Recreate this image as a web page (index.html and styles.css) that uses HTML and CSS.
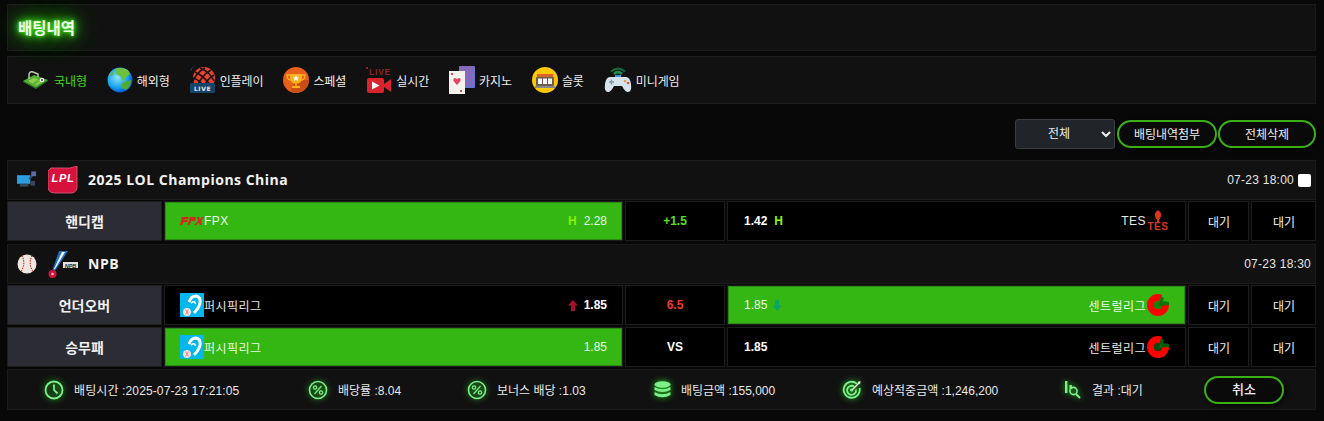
FILE: index.html
```html
<!DOCTYPE html>
<html lang="ko">
<head>
    <meta charset="UTF-8">
    <meta name="viewport" content="width=device-width, initial-scale=1.0">
    <title>배팅내역</title>
    <link rel="stylesheet" href="styles.css">
</head>
<body>
    <div class="page-title"><h1>배팅내역</h1></div>

    <div class="tabs">
        <a class="tab active">
            <svg class="tab-icon field" width="25" height="18" viewBox="0 0 25 18"><path d="M0 10 L11 4 L25 9 L13 17Z" fill="#4fae34"/><path d="M0 10 L13 17 L13 18 L0 11Z" fill="#2c7a24"/><path d="M13 17 L25 9 L25 10 L13 18Z" fill="#226a1e"/><path d="M5 10 L11 7 L20 10.5 L13 14.5Z" fill="#8ed04a"/><path d="M8 13 L14 9 L17 10 L11 14.5Z" fill="#5fb83a"/><path d="M6 8 V3 Q7 0 10 1 L15 3 V6" fill="none" stroke="#b9c9b4" stroke-width="1.5"/><circle cx="19" cy="9" r="2.2" fill="#f4f4f4"/><circle cx="19" cy="9" r="0.9" fill="#333"/></svg>
            <span>국내형</span>
        </a>
        <a class="tab">
            <svg class="tab-icon" width="26" height="26" viewBox="0 0 26 26"><defs><radialGradient id="globe" cx="0.4" cy="0.4" r="0.7"><stop offset="0" stop-color="#8fe4ff"/><stop offset="0.6" stop-color="#12a0f0"/><stop offset="1" stop-color="#0433c8"/></radialGradient></defs><circle cx="13" cy="13" r="12.5" fill="url(#globe)"/><path d="M9 1.5 Q16 0 21 3 L23 7 L17 12 L19 15 L16 14 L13 9 L9 7Z" fill="#6cc23e"/><path d="M15 16 L24 13 Q24 20 19 23 L15 21Z" fill="#4fae30"/><path d="M2 9 Q4 5 7 4 L6 8Z" fill="#5cb53e"/></svg>
            <span>해외형</span>
        </a>
        <a class="tab">
            <svg class="tab-icon" width="26" height="28" viewBox="0 0 26 28"><path d="M0 4 Q2 0 6 0 Q2 1 1.5 5Z" fill="#1c3a57"/><circle cx="14" cy="12" r="11" fill="#e8432e"/><path d="M5 6 Q14 10 21 20 M10 2 Q20 6 24 15 M3 12 Q10 14 15 22 M21 4 Q12 9 7 20 M15 2 Q7 6 3 15 M24 9 Q17 13 13 22" fill="none" stroke="#1a1010" stroke-width="1.5"/><rect x="0" y="17" width="25" height="10" rx="1.5" fill="#15456b"/><text class="live-small" x="12.5" y="25">LIVE</text></svg>
            <span>인플레이</span>
        </a>
        <a class="tab">
            <svg class="tab-icon" width="26" height="26" viewBox="0 0 26 26"><circle cx="13" cy="13" r="13" fill="#e8601c"/><path d="M13 13 L26 13 A13 13 0 0 1 7 24.5Z" fill="#c94f14"/><path d="M7 7 H19 V11 Q19 16 13 17 Q7 16 7 11Z" fill="#f9b21d"/><path d="M7 8 H4 Q4 13 8 13 M19 8 H22 Q22 13 18 13" fill="none" stroke="#f9b21d" stroke-width="1.3"/><rect x="12" y="16" width="2" height="3" fill="#e79a12"/><rect x="9" y="19" width="8" height="2" fill="#f9b21d"/><path d="M13 8 L14 10.2 L16.2 10.4 L14.5 11.8 L15 14 L13 12.8 L11 14 L11.5 11.8 L9.8 10.4 L12 10.2Z" fill="#fff"/></svg>
            <span>스페셜</span>
        </a>
        <a class="tab">
            <svg class="tab-icon" width="26" height="28" viewBox="0 0 26 28"><rect x="0" y="1" width="2" height="2" fill="#8e2323"/><text class="live-big" x="3" y="9">LIVE</text><rect x="1" y="12" width="17" height="15" rx="2" fill="#d9232e"/><path d="M18 18 L25 13 V26 L18 21Z" fill="#d9232e"/><path d="M6 15.5 L13.5 19.5 L6 23.5Z" fill="#fff"/></svg>
            <span>실시간</span>
        </a>
        <a class="tab">
            <svg class="tab-icon" width="26" height="28" viewBox="0 0 26 28"><rect x="10" y="0" width="16" height="22" rx="1" fill="#5f78d8"/><path d="M11 3 L14 0 M11 7 L18 0 M11 11 L22 0 M11 15 L25 1 M13 18 L25 5 M16 20 L25 10 M20 21 L25 15" stroke="#b45a94" stroke-width="1.2"/><rect x="0" y="5" width="16" height="23" fill="#f6f2ee"/><path d="M8 19 L4.5 15 Q4 12 6 12 Q7.5 12 8 13.5 Q8.5 12 10 12 Q12 12 11.5 15Z" fill="#e2475c"/><rect x="2" y="7" width="2" height="2" fill="#e2475c"/><rect x="11" y="24" width="2" height="2" fill="#e2475c"/></svg>
            <span>카지노</span>
        </a>
        <a class="tab">
            <svg class="tab-icon" width="26" height="26" viewBox="0 0 26 26"><circle cx="13" cy="13" r="13" fill="#fcc900"/><rect x="5" y="7" width="16" height="3" fill="#d9622b"/><rect x="4" y="10" width="18" height="9" rx="1" fill="#6a5c50"/><rect x="6" y="11.5" width="4" height="5.5" fill="#f5f5f5"/><rect x="11" y="11.5" width="4" height="5.5" fill="#f5f5f5"/><rect x="16" y="11.5" width="4" height="5.5" fill="#f5f5f5"/><rect x="3" y="19" width="20" height="2" fill="#8a8a8a"/></svg>
            <span>슬롯</span>
        </a>
        <a class="tab">
            <svg class="tab-icon" width="28" height="26" viewBox="0 0 28 26"><path d="M9 6 Q14 1 19 6 L17 8 Q14 5 11 8Z" fill="#1e8a4c"/><path d="M6 4 Q14 -3 22 4 L20 5 Q14 0 8 5Z" fill="#17703e"/><rect x="11" y="8" width="6" height="4" fill="#3a9ad9"/><path d="M6 10 H22 Q26 10 27 17 Q28 25 24 25 Q21 25 18 19 H10 Q7 25 4 25 Q0 25 1 17 Q2 10 6 10Z" fill="#d5e3ec"/><circle cx="21" cy="14" r="1.3" fill="#e2a33b"/><circle cx="24" cy="16" r="1.3" fill="#d9534f"/><path d="M5 15 H10 M7.5 12.5 V17.5" stroke="#8a98a3" stroke-width="1.6"/></svg>
            <span>미니게임</span>
        </a>
    </div>

    <div class="toolbar">
        <select class="filter"><option>전체</option></select>
        <button class="btn-round wide">배팅내역첨부</button>
        <button class="btn-round">전체삭제</button>
    </div>

    <div class="bet-head">
        <svg class="sport-icon" width="21" height="18" viewBox="0 0 21 18"><rect x="0" y="4" width="14" height="9" fill="#2d9fe0"/><rect x="3" y="13" width="9" height="3" fill="#3a4556"/><path d="M13 8 L17 3" stroke="#3a4a6a" stroke-width="2"/><rect x="15" y="0" width="5" height="5" fill="#5a6ca8"/><rect x="14" y="10" width="5" height="5" fill="#3a4556"/></svg>
        <svg class="league-icon" width="30" height="28" viewBox="0 0 30 28"><path d="M3 2 H22 L29 0 V21 Q29 26 24 27 H7 Q0 27 0 21 V5Z" fill="#d6113c" stroke="#e0607c" stroke-width="0.8"/><text class="lpl-text" x="15" y="16">LPL</text></svg>
        <span class="league-name">2025 LOL Champions China</span>
        <span class="bet-time">07-23 18:00</span>
        <span class="check"></span>
    </div>
    <div class="bet-row">
        <div class="cell type">핸디캡</div>
        <div class="cell pick on">
            <span class="team">
                <svg width="24" height="10" viewBox="0 0 24 10"><path d="M2 1 H9 L8 3 H5 L4.5 4 H8 L7 6 H4 L2 9 H0Z M10 1 H16 L15 5 H11.5 L9 9 H7.5Z M17 1 H19 L20 3.5 L22 1 H24 L21 5 L22 9 H20 L19 6.5 L16 9 H14 L18 5Z" fill="#d9261c"/></svg>FPX
            </span>
            <span class="odds"><span class="mark">H</span>2.28</span>
        </div>
        <div class="cell line lime">+1.5</div>
        <div class="cell pick">
            <span class="odds bold">1.42<span class="mark after">H</span></span>
            <span class="team">TES
                <svg width="24" height="24" viewBox="0 0 24 24"><path d="M12 1 Q17 4 14 10 H10 Q7 4 12 1Z" fill="#d9341c"/><rect x="11" y="10" width="2" height="3" fill="#d9341c"/><text class="tes-text" x="12" y="21">TES</text></svg>
            </span>
        </div>
        <div class="cell wait">대기</div>
        <div class="cell wait">대기</div>
    </div>

    <div class="bet-head second">
        <svg class="sport-icon" width="20" height="20" viewBox="0 0 20 20"><circle cx="10" cy="10" r="9.5" fill="#efe6e0"/><path d="M5 1.5 Q9 10 4 17.5 M15 1.5 Q11 10 16 17.5" fill="none" stroke="#c0392b" stroke-width="1.2" stroke-dasharray="1.5 1"/></svg>
        <svg class="league-icon" width="30" height="28" viewBox="0 0 30 28"><path d="M11 1 H20 L7 21 H4Z" fill="#1f6fc4"/><path d="M14 2 H17 L7 19 H6Z" fill="#fff"/><circle cx="4.5" cy="24" r="4" fill="#d6113c"/><circle cx="4.5" cy="24" r="1.3" fill="#f2c0c8"/><rect x="15" y="12" width="15" height="6" fill="#e2e2e2"/><text class="npb-text" x="22.5" y="17.5">NPB</text></svg>
        <span class="league-name">NPB</span>
        <span class="bet-time">07-23 18:30</span>
    </div>
    <div class="bet-row">
        <div class="cell type">언더오버</div>
        <div class="cell pick">
            <span class="team"><svg width="24" height="24" viewBox="0 0 24 24"><use href="#pacific"/></svg>퍼시픽리그</span>
            <span class="odds bold"><svg class="arrow" width="10" height="11" viewBox="0 0 10 11"><path d="M5 0 L10 5.5 H7 V11 H3 V5.5 H0Z" fill="#a8102c"/></svg>1.85</span>
        </div>
        <div class="cell line red">6.5</div>
        <div class="cell pick on">
            <span class="odds">1.85<svg class="arrow after" width="10" height="11" viewBox="0 0 10 11"><path d="M5 11 L10 5.5 H7 V0 H3 V5.5 H0Z" fill="#0aa36a"/></svg></span>
            <span class="team">센트럴리그<svg width="24" height="24" viewBox="0 0 24 24"><use href="#central"/></svg></span>
        </div>
        <div class="cell wait">대기</div>
        <div class="cell wait">대기</div>
    </div>
    <div class="bet-row">
        <div class="cell type">승무패</div>
        <div class="cell pick on">
            <span class="team"><svg width="24" height="24" viewBox="0 0 24 24"><use href="#pacific"/></svg>퍼시픽리그</span>
            <span class="odds">1.85</span>
        </div>
        <div class="cell line">VS</div>
        <div class="cell pick">
            <span class="odds bold">1.85</span>
            <span class="team">센트럴리그<svg width="24" height="24" viewBox="0 0 24 24"><use href="#central"/></svg></span>
        </div>
        <div class="cell wait">대기</div>
        <div class="cell wait">대기</div>
    </div>

    <div class="summary">
        <div class="sum-item s1">
            <svg class="glow" width="20" height="20" viewBox="0 0 20 20"><circle cx="10" cy="10" r="8.5" fill="none" stroke="#7df08a" stroke-width="1.8"/><path d="M10 4.5 V10 L13.5 13.5" fill="none" stroke="#7df08a" stroke-width="1.8"/></svg>
            <span>배팅시간 :2025-07-23 17:21:05</span>
        </div>
        <div class="sum-item s2">
            <svg class="glow" width="20" height="20" viewBox="0 0 20 20"><use href="#percent"/></svg>
            <span>배당률 :8.04</span>
        </div>
        <div class="sum-item s3">
            <svg class="glow" width="20" height="20" viewBox="0 0 20 20"><use href="#percent"/></svg>
            <span>보너스 배당 :1.03</span>
        </div>
        <div class="sum-item s4">
            <svg class="glow" width="17" height="18" viewBox="0 0 17 18"><ellipse cx="8.5" cy="3.5" rx="8" ry="3.2" fill="#7df08a"/><path d="M.5 6 Q8.5 10.5 16.5 6 V9 Q8.5 13 .5 9Z" fill="#7df08a"/><path d="M.5 11 Q8.5 15.5 16.5 11 V14 Q8.5 18.5 .5 14Z" fill="#7df08a"/></svg>
            <span>배팅금액 :155,000</span>
        </div>
        <div class="sum-item s5">
            <svg class="glow" width="20" height="20" viewBox="0 0 20 20"><path d="M15 3.8 A8 8 0 1 0 17.5 8" fill="none" stroke="#7df08a" stroke-width="1.8"/><path d="M12 6.5 A4.5 4.5 0 1 0 14 9.5" fill="none" stroke="#7df08a" stroke-width="1.8"/><circle cx="9.5" cy="10" r="1.6" fill="#7df08a"/><path d="M10 10 L17 3" stroke="#e8ffe8" stroke-width="1.5"/><path d="M15.5 2 L18.5 1 L18 4.5Z" fill="#e8ffe8"/></svg>
            <span>예상적중금액 :1,246,200</span>
        </div>
        <div class="sum-item s6">
            <svg class="glow" width="18" height="20" viewBox="0 0 18 20"><rect x="1" y="1" width="2.4" height="12" fill="#7df08a"/><rect x="5.5" y="5" width="2.4" height="4" fill="#7df08a"/><circle cx="9.5" cy="11" r="3.6" fill="none" stroke="#7df08a" stroke-width="1.6"/><path d="M12 14 L16 18" stroke="#7df08a" stroke-width="2"/></svg>
            <span>결과 :대기</span>
        </div>
        <button class="btn-round cancel">취소</button>
    </div>

    <svg class="defs" width="0" height="0">
        <defs>
            <g id="pacific">
                <rect width="24" height="24" fill="#00b7ee"/>
                <path d="M9 9 Q11 3 16 3 Q21 4 20 10 Q19 15 14 20" fill="none" stroke="#fff" stroke-width="3"/>
                <path d="M11 10 Q15 7 15.5 11" fill="none" stroke="#fff" stroke-width="1.6"/>
                <circle cx="7" cy="19" r="4" fill="#fbe3e3"/>
                <path d="M5.5 16.5 L8.5 21.5 M8.5 16.5 L5.5 21.5" stroke="#e06b7a" stroke-width="0.8"/>
            </g>
            <g id="central">
                <circle cx="12" cy="12" r="7.5" fill="none" stroke="#ff0000" stroke-width="7" stroke-dasharray="38 9.2"/>
                <circle cx="12" cy="12" r="4" fill="#0b6a0b" fill-opacity="0.7"/>
                <path d="M13 11 L15 3 L18 5 L17 8 L23 9 L23 12 L14 13Z" fill="#0b6a0b" fill-opacity="0.85"/>
            </g>
            <g id="percent">
                <circle cx="10" cy="10" r="8.5" fill="none" stroke="#7df08a" stroke-width="1.6"/>
                <circle cx="7" cy="7.5" r="1.7" fill="none" stroke="#7df08a" stroke-width="1.2"/>
                <circle cx="13" cy="12.5" r="1.7" fill="none" stroke="#7df08a" stroke-width="1.2"/>
                <path d="M13.5 6 L6.5 14" stroke="#7df08a" stroke-width="1.2"/>
            </g>
        </defs>
    </svg>
</body>
</html>
```

FILE: styles.css
```css
* {
    margin: 0;
    padding: 0;
    box-sizing: border-box;
}

body {
    background-color: #080808;
    color: #eee;
    font-family: "Liberation Sans", "Noto Sans CJK KR", sans-serif;
    font-size: 12px;
    width: 1324px;
    height: 421px;
    overflow: hidden;
    padding: 4px 8px 0 7px;
}

svg {
    display: block;
    flex-shrink: 0;
}

.defs {
    position: absolute;
}

/* 상단 제목 */
.page-title {
    height: 47px;
    background-color: #111;
    border: 1px solid #1b1b1b;
    display: flex;
    align-items: center;
    padding: 0 0 2px 10px;
}

.page-title h1 {
    font-size: 15.5px;
    font-weight: 700;
    color: #f4fff0;
    text-shadow: 0 0 3px #3fe01a, 0 0 6px #3fe01a, 0 0 10px #3fe01a, 0 0 18px #2fc010, 0 0 30px #2fc010;
}

/* 탭 */
.tabs {
    height: 48px;
    margin-top: 5px;
    background-color: #111;
    border: 1px solid #1b1b1b;
    display: flex;
    align-items: center;
    padding-left: 15px;
    gap: 20px;
    letter-spacing: -0.1px;
}

.tab {
    display: flex;
    align-items: center;
    gap: 4px;
    color: #eee;
    white-space: nowrap;
}

.tab.active {
    color: #3fdc1a;
}

.field {
    margin-right: 2px;
}

.live-small {
    font: 700 6px "DejaVu Sans", sans-serif;
    fill: #e8e8e8;
    text-anchor: middle;
    letter-spacing: 0.6px;
}

.live-big {
    font: 700 8.5px "Liberation Sans", sans-serif;
    fill: #8e2323;
    letter-spacing: 0.8px;
}

.lpl-text {
    font: italic 900 11px "Liberation Sans", sans-serif;
    fill: #fff;
    text-anchor: middle;
    letter-spacing: 0.8px;
}

.tes-text {
    font: 900 10px "Liberation Sans", sans-serif;
    fill: #d9341c;
    text-anchor: middle;
    letter-spacing: 0.5px;
}

.npb-text {
    font: italic 700 5.5px "Liberation Sans", sans-serif;
    fill: #222;
    text-anchor: middle;
}

/* 필터 줄 */
.toolbar {
    height: 30px;
    margin-top: 15px;
    display: flex;
    align-items: center;
    justify-content: flex-end;
    gap: 1px;
}

.filter {
    width: 100px;
    height: 30px;
    margin-right: 1px;
    background-color: #212529;
    border: 1px solid #3a3d42;
    border-radius: 3px;
    color: #eee;
    font: inherit;
    text-align: center;
}

.btn-round {
    width: 98px;
    height: 28px;
    padding-bottom: 2px;
    background-color: #0a0a0a;
    border: 2px solid #39b014;
    border-radius: 14px;
    color: #eee;
    font: inherit;
    box-shadow: 2px 2px 4px rgba(0, 0, 0, 0.7);
}

.btn-round.wide {
    width: 100px;
}

/* 리그 헤더 */
.bet-head {
    height: 40px;
    margin-top: 11px;
    background-color: #111;
    border: 1px solid #1b1b1b;
    display: flex;
    align-items: center;
    padding: 0 4px 0 9px;
}

.bet-head.second {
    margin-top: 3px;
}

.sport-icon {
    width: 20px;
    margin-right: 11px;
}

.league-icon {
    margin-right: 10px;
}

.league-name {
    font-family: "Open Sans", "Noto Sans CJK KR", sans-serif;
    font-size: 14px;
    font-weight: 700;
    letter-spacing: 0.5px;
    padding-bottom: 2px;
    color: #f2f2f2;
}

.bet-time {
    margin-left: auto;
    color: #e4e4e4;
    letter-spacing: 0.25px;
}

.check {
    width: 13px;
    height: 13px;
    margin-left: 4px;
    background-color: #fff;
    border-radius: 2px;
}

/* 배팅 줄 */
.bet-row {
    display: grid;
    grid-template-columns: 155px 459px 100px 459px 61px 65px;
    column-gap: 2px;
    height: 40px;
    margin-top: 1px;
}

.bet-row + .bet-row {
    margin-top: 2px;
}

.cell {
    background-color: #000;
    border: 1px solid #1d1d1d;
    display: flex;
    align-items: center;
    justify-content: center;
}

.cell.type {
    background-color: #2c2c34;
    border-color: #1d1d1d;
    padding-bottom: 1px;
    font-size: 14px;
    font-weight: 700;
    color: #f0f0f0;
}

.cell.pick {
    justify-content: space-between;
    padding: 0 15px;
    color: #e8e8e8;
}

.cell.line + .cell.pick {
    padding-left: 16px;
}

.cell.pick.on {
    background-color: #34b713;
    box-shadow: inset 0 0 0 1px #2a8a14;
    color: #eaf7e6;
}

.team {
    display: flex;
    align-items: center;
    letter-spacing: 0.45px;
}

.odds {
    display: flex;
    align-items: center;
}

.odds.bold {
    font-weight: 700;
    color: #fff;
}

.mark {
    color: #8cf000;
    font-weight: 700;
    margin-right: 7px;
}

.mark.after {
    margin: 0 0 0 7px;
}

.arrow {
    margin-right: 6px;
}

.arrow.after {
    margin: 0 0 0 5px;
}

.cell.line {
    font-weight: 700;
    color: #fff;
}

.cell.line.lime {
    color: #5ae01a;
}

.cell.line.red {
    color: #f03a2a;
}

.cell.wait {
    padding-left: 1px;
}

/* 하단 요약 */
.summary {
    height: 41px;
    margin-top: 2px;
    background-color: #111;
    border: 1px solid #1b1b1b;
    display: flex;
    align-items: center;
    padding-left: 36px;
}

.sum-item {
    display: flex;
    align-items: center;
    gap: 10px;
    color: #e8e8e8;
    white-space: nowrap;
}

.sum-item.s1 { width: 264px; letter-spacing: 0.12px; }
.sum-item.s2 { width: 159px; }
.sum-item.s3 { width: 187px; }
.sum-item.s4 { width: 188px; }
.sum-item.s5 { width: 222px; }
.sum-item.s6 { width: 140px; }

.glow {
    filter: drop-shadow(0 0 3px #25d020);
}

.btn-round.cancel {
    width: 80px;
    height: 28px;
    font-size: 13px;
    font-weight: 500;
}
```
